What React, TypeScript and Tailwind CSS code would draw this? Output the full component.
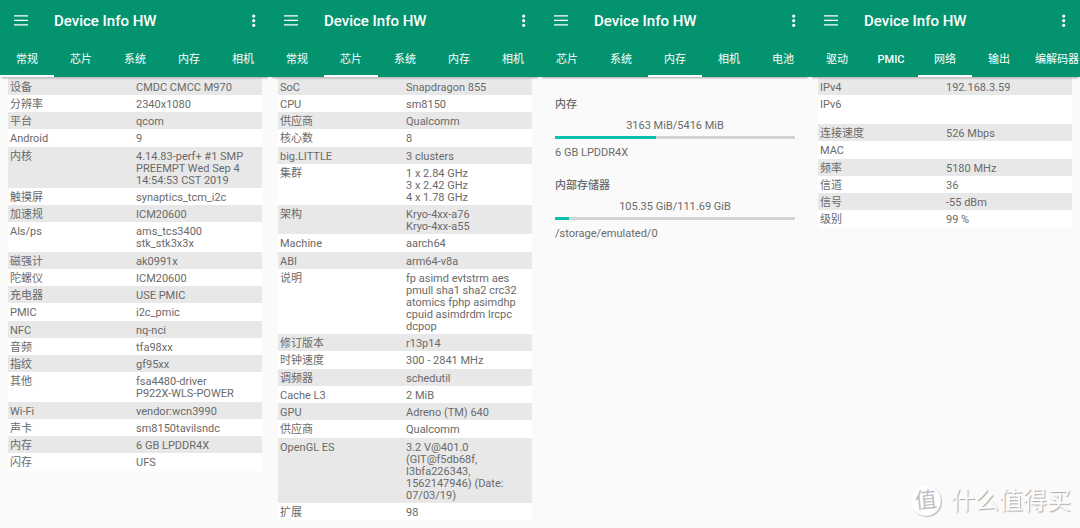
import React from 'react';

type Row = { label: string; value: string };

type Tab = { name: string; active?: boolean };

const generalRows: Row[] = [
  { label: '设备', value: 'CMDC CMCC M970' },
  { label: '分辨率', value: '2340x1080' },
  { label: '平台', value: 'qcom' },
  { label: 'Android', value: '9' },
  { label: '内核', value: '4.14.83-perf+ #1 SMP\nPREEMPT Wed Sep 4\n14:54:53 CST 2019' },
  { label: '触摸屏', value: 'synaptics_tcm_i2c' },
  { label: '加速规', value: 'ICM20600' },
  { label: 'Als/ps', value: 'ams_tcs3400\nstk_stk3x3x' },
  { label: '磁强计', value: 'ak0991x' },
  { label: '陀螺仪', value: 'ICM20600' },
  { label: '充电器', value: 'USE PMIC' },
  { label: 'PMIC', value: 'i2c_pmic' },
  { label: 'NFC', value: 'nq-nci' },
  { label: '音频', value: 'tfa98xx' },
  { label: '指纹', value: 'gf95xx' },
  { label: '其他', value: 'fsa4480-driver\nP922X-WLS-POWER' },
  { label: 'Wi-Fi', value: 'vendor:wcn3990' },
  { label: '声卡', value: 'sm8150tavilsndc' },
  { label: '内存', value: '6 GB LPDDR4X' },
  { label: '闪存', value: 'UFS' },
];

const chipRows: Row[] = [
  { label: 'SoC', value: 'Snapdragon 855' },
  { label: 'CPU', value: 'sm8150' },
  { label: '供应商', value: 'Qualcomm' },
  { label: '核心数', value: '8' },
  { label: 'big.LITTLE', value: '3 clusters' },
  { label: '集群', value: '1 x 2.84 GHz\n3 x 2.42 GHz\n4 x 1.78 GHz' },
  { label: '架构', value: 'Kryo-4xx-a76\nKryo-4xx-a55' },
  { label: 'Machine', value: 'aarch64' },
  { label: 'ABI', value: 'arm64-v8a' },
  { label: '说明', value: 'fp asimd evtstrm aes\npmull sha1 sha2 crc32\natomics fphp asimdhp\ncpuid asimdrdm lrcpc\ndcpop' },
  { label: '修订版本', value: 'r13p14' },
  { label: '时钟速度', value: '300 - 2841 MHz' },
  { label: '调频器', value: 'schedutil' },
  { label: 'Cache L3', value: '2 MiB' },
  { label: 'GPU', value: 'Adreno (TM) 640' },
  { label: '供应商', value: 'Qualcomm' },
  { label: 'OpenGL ES', value: '3.2 V@401.0\n(GIT@f5db68f,\nI3bfa226343,\n1562147946) (Date:\n07/03/19)' },
  { label: '扩展', value: '98' },
];

const networkRows: Row[] = [
  { label: 'IPv4', value: '192.168.3.59' },
  { label: 'IPv6', value: '\u00a0\n\u00a0' },
  { label: '连接速度', value: '526 Mbps' },
  { label: 'MAC', value: '' },
  { label: '频率', value: '5180 MHz' },
  { label: '信道', value: '36' },
  { label: '信号', value: '-55 dBm' },
  { label: '级别', value: '99 %' },
];

const storage = [
  { title: '内存', usage: '3163 MiB/5416 MiB', percent: 42, note: '6 GB LPDDR4X' },
  { title: '内部存储器', usage: '105.35 GiB/111.69 GiB', percent: 6, note: '/storage/emulated/0' },
];

function AppBar({ tabs }: { tabs: Tab[] }) {
  return (
    <header className="relative z-10 bg-[#03946f] text-white shadow-[0_3px_2px_-2px_rgba(0,0,0,0.35)]">
      <div className="flex h-[42px] items-center px-[14px]">
        <button type="button" aria-label="Menu" className="shrink-0">
          <svg className="block h-[12px] w-[14px]" viewBox="0 0 14 12" fill="currentColor">
            <path d="M0 .3h14v1.3H0zM0 4.8h14v1.3H0zM0 9.3h14v1.3H0z" />
          </svg>
        </button>
        <h1 className="ml-[26px] flex-1 text-[15px] leading-[20px] font-medium">Device Info HW</h1>
        <button type="button" aria-label="More options" className="shrink-0">
          <svg className="block h-[14px] w-[4px]" viewBox="0 0 4 14" fill="currentColor">
            <circle cx="1.7" cy="2.1" r="1.6" />
            <circle cx="1.7" cy="6.7" r="1.6" />
            <circle cx="1.7" cy="11.3" r="1.6" />
          </svg>
        </button>
      </div>
      <nav className="flex h-[35px] overflow-hidden">
        {tabs.map((tab) => (
          <button
            key={tab.name}
            type="button"
            className={
              tab.active
                ? 'min-w-[20%] shrink-0 border-b-2 border-white px-[9px] pt-[3px] text-[11px] leading-[12px]'
                : 'min-w-[20%] shrink-0 border-b-2 border-transparent px-[9px] pt-[3px] text-[11px] leading-[12px]'
            }
          >
            {/* Latin names are set in Roboto Medium, Chinese ones in the regular cut */}
            <span className={/^[A-Z]+$/.test(tab.name) ? 'font-medium' : 'font-normal'}>{tab.name}</span>
          </button>
        ))}
      </nav>
    </header>
  );
}

function InfoTable({ rows }: { rows: Row[] }) {
  return (
    <div className="pt-px pr-[8px] pl-[8px]">
      <table className="w-full table-fixed text-left text-[11px] leading-[12px] text-[#6a6a6a]">
        <colgroup>
          <col className="w-1/2" />
          <col className="w-1/2" />
        </colgroup>
        <tbody>
          {rows.map((row, i) => (
            <tr key={i} className="bg-white align-top odd:bg-[#e8e8e8] [&:nth-child(4n)>*]:pb-[2px]">
              <th scope="row" className="pt-[4px] pb-px pl-[2px] font-normal">{row.label}</th>
              <td className="pt-[4px] pb-px pl-px whitespace-pre-line">{row.value}</td>
            </tr>
          ))}
        </tbody>
      </table>
    </div>
  );
}

function StorageList() {
  return (
    <div className="flex flex-col gap-[21px] px-[15px] pt-[22px] text-[11px] leading-[12px] text-[#6a6a6a]">
      {storage.map((item) => (
        <section key={item.title}>
          <h2 className="font-medium">{item.title}</h2>
          <p className="mt-[9px] text-center">{item.usage}</p>
          <div className="mt-[4px] h-[3px] bg-[#d3d3d3]">
            <div className="h-full bg-[#04c2ad]" style={{ width: `${item.percent}%` }} />
          </div>
          <p className="mt-[8px]">{item.note}</p>
        </section>
      ))}
    </div>
  );
}

function Watermark() {
  return (
    <div className="absolute right-[9px] bottom-[11px] flex items-center gap-[10px] text-[#fdfdfd] [text-shadow:1px_1px_1px_#a8a8a8]">
      <span className="flex size-[30px] items-center justify-center rounded-full bg-white shadow-[1px_1px_1px_#b8b8b8]">
        <span className="-rotate-6 text-[22px] leading-none text-[#c0c0c0] [text-shadow:none]">值</span>
      </span>
      <span className="text-[24px] leading-[32px]">什么值得买</span>
    </div>
  );
}

export default function App() {
  return (
    <main
      lang="zh-CN"
      className="relative grid min-h-screen grid-cols-4 overflow-hidden bg-[#fafafa] font-[Roboto,'Noto_Sans_CJK_SC',sans-serif]"
    >
      <div>
        <AppBar tabs={[{ name: '常规', active: true }, { name: '芯片' }, { name: '系统' }, { name: '内存' }, { name: '相机' }]} />
        <InfoTable rows={generalRows} />
      </div>
      <div>
        <AppBar tabs={[{ name: '常规' }, { name: '芯片', active: true }, { name: '系统' }, { name: '内存' }, { name: '相机' }]} />
        <InfoTable rows={chipRows} />
      </div>
      <div>
        <AppBar tabs={[{ name: '芯片' }, { name: '系统' }, { name: '内存', active: true }, { name: '相机' }, { name: '电池' }]} />
        <StorageList />
      </div>
      <div>
        <AppBar tabs={[{ name: '驱动' }, { name: 'PMIC' }, { name: '网络', active: true }, { name: '输出' }, { name: '编解码器' }]} />
        <InfoTable rows={networkRows} />
      </div>
      <Watermark />
    </main>
  );
}
